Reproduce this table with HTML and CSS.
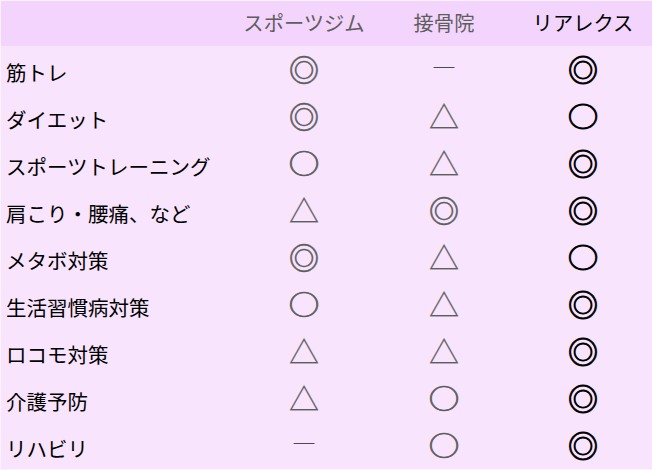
FILE: index.html
```html
<!DOCTYPE html>
<html lang="ja">
<head>
<meta charset="utf-8">
<link rel="stylesheet" href="styles.css">
</head>
<body>
<div class="table">
  <div class="row head">
    <div class="cell label"></div>
    <div class="cell h grey">スポーツジム</div>
    <div class="cell h grey">接骨院</div>
    <div class="cell h dark">リアレクス</div>
  </div>
  <div class="row">
    <div class="cell label">筋トレ</div>
    <div class="cell sym grey"><span>◎</span></div>
    <div class="cell sym grey dash"><span>―</span></div>
    <div class="cell sym dark"><span>◎</span></div>
  </div>
  <div class="row">
    <div class="cell label">ダイエット</div>
    <div class="cell sym grey"><span>◎</span></div>
    <div class="cell sym grey t"><span>△</span></div>
    <div class="cell sym dark o"><span>○</span></div>
  </div>
  <div class="row">
    <div class="cell label">スポーツトレーニング</div>
    <div class="cell sym grey o"><span>○</span></div>
    <div class="cell sym grey t"><span>△</span></div>
    <div class="cell sym dark"><span>◎</span></div>
  </div>
  <div class="row">
    <div class="cell label">肩こり・腰痛、など</div>
    <div class="cell sym grey t"><span>△</span></div>
    <div class="cell sym grey"><span>◎</span></div>
    <div class="cell sym dark"><span>◎</span></div>
  </div>
  <div class="row">
    <div class="cell label">メタボ対策</div>
    <div class="cell sym grey"><span>◎</span></div>
    <div class="cell sym grey t"><span>△</span></div>
    <div class="cell sym dark o"><span>○</span></div>
  </div>
  <div class="row">
    <div class="cell label">生活習慣病対策</div>
    <div class="cell sym grey o"><span>○</span></div>
    <div class="cell sym grey t"><span>△</span></div>
    <div class="cell sym dark"><span>◎</span></div>
  </div>
  <div class="row">
    <div class="cell label">ロコモ対策</div>
    <div class="cell sym grey t"><span>△</span></div>
    <div class="cell sym grey t"><span>△</span></div>
    <div class="cell sym dark"><span>◎</span></div>
  </div>
  <div class="row">
    <div class="cell label">介護予防</div>
    <div class="cell sym grey t"><span>△</span></div>
    <div class="cell sym grey o"><span>○</span></div>
    <div class="cell sym dark"><span>◎</span></div>
  </div>
  <div class="row">
    <div class="cell label">リハビリ</div>
    <div class="cell sym grey dash"><span>―</span></div>
    <div class="cell sym grey o"><span>○</span></div>
    <div class="cell sym dark"><span>◎</span></div>
  </div>
</div>
</body>
</html>
```
FILE: styles.css
```css
html, body {
  margin: 0;
  padding: 0;
  background: #fcf2fe;
}
body {
  width: 652px;
  height: 470px;
  overflow: hidden;
  font-family: "Noto Sans CJK JP", "Noto Sans", sans-serif;
  color: #000;
}
.table {
  padding: 1px 0 1px 1px;
  display: flex;
  flex-direction: column;
}
.row {
  display: grid;
  grid-template-columns: 233px 140px 140px 1fr;
  height: 47px;
  background: #f8e4fd;
}
.row.head {
  height: 45px;
  background: #f3d4fc;
}
.cell {
  display: flex;
  align-items: center;
  line-height: 1;
}
.label {
  padding: 6px 0 0 5px;
  font-size: 20.5px;
}
.h {
  justify-content: center;
  font-size: 20.3px;
  padding-bottom: 3px;
}
.sym {
  justify-content: center;
  font-size: 30px;
  padding-bottom: 3px;
}
.sym > span { display: block; }
.grey { color: #5e5e5e; }
.sym.grey { -webkit-text-stroke: 0.6px #5e5e5e; }
.dark { color: #000; }
.sym.dark { -webkit-text-stroke: 0.9px #000; }
.sym.o > span { transform: scale(1.02, 0.9); }
.sym.grey.o { -webkit-text-stroke: 0.8px #5e5e5e; }
.sym.t { -webkit-text-stroke: 0.2px #5e5e5e; }
.sym.dash {
  font-size: 24px;
  padding-bottom: 7px;
  color: #4a4a4a;
  -webkit-text-stroke: 0.2px #4a4a4a;
}
```
